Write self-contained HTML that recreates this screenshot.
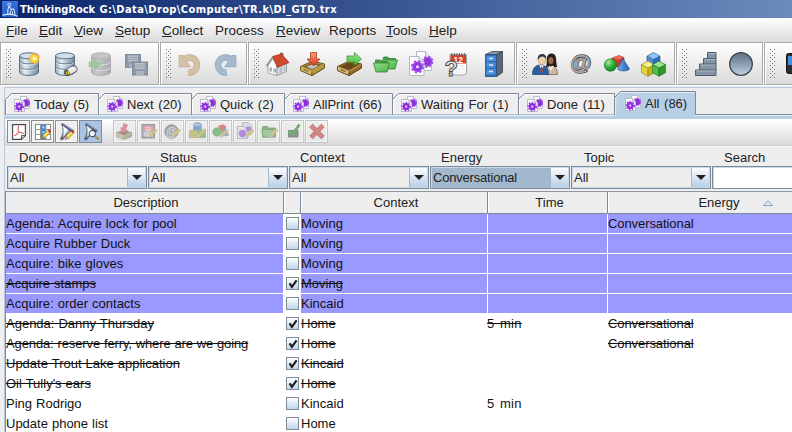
<!DOCTYPE html>
<html><head><meta charset="utf-8"><title>ThinkingRock</title>
<style>
*{box-sizing:border-box;margin:0;padding:0}
html,body{width:792px;height:432px;overflow:hidden;background:#eee}
body{font-family:"Liberation Sans",sans-serif;font-size:13px;color:#1a1a1a;position:relative;word-spacing:.4px}
.a{position:absolute}
svg{position:absolute;overflow:visible}
#title{position:absolute;left:0;top:0;width:792px;height:18px;background:linear-gradient(90deg,#0a246a 0,#a6caf0 1280px)}
#title span{position:absolute;left:20px;top:2px;font-family:"DejaVu Sans Condensed","DejaVu Sans",sans-serif;font-weight:bold;font-size:11px;color:#fff;line-height:16px;white-space:nowrap}
#menu{position:absolute;left:0;top:18px;width:792px;height:24px;background:linear-gradient(#fff,#dadada)}
#menu span{position:absolute;top:5px;line-height:16px;white-space:nowrap;font-size:13.5px;color:#222}
#menu u{text-decoration:underline;text-underline-offset:1px}
#tbar{position:absolute;left:0;top:42px;width:792px;height:44px;background:#fff}
.tg{position:absolute;top:0px;height:43px;border:1px solid #a9a9a9;background:linear-gradient(#fff,#dadada);box-shadow:inset 1px 1px 0 #fff}
#tabs{position:absolute;left:0;top:86px;width:792px;height:30px;background:#eee}
.tab{position:absolute;top:6px;height:23px}
.tab span{position:absolute;top:5px;line-height:16px;white-space:nowrap;color:#222}
#band{position:absolute;left:5px;top:115px;width:787px;height:4px;background:#b8cfe5;border-top:1px solid #e6eef7}
#stb{position:absolute;left:5px;top:119px;width:787px;height:27px;background:linear-gradient(#fff,#dadada);border-bottom:1px solid #cdcdcd}
.sb{position:absolute;top:1px;width:23px;height:23px;border:1px solid #8c8c8c;background:#eee;box-shadow:inset 0 0 0 1px rgba(255,255,255,.55)}
.sbd{position:absolute;top:1px;width:23px;height:23px;border:1px solid #c6c6c6;background:rgba(232,232,232,.75);box-shadow:inset 0 0 0 1px rgba(255,255,255,.5)}
#flt{position:absolute;left:5px;top:146px;width:787px;height:46px;background:#eee;border-top:1px solid #fafafa}
.lbl{position:absolute;top:150px;line-height:16px;white-space:nowrap;color:#222}
.cb{position:absolute;top:166px;height:23px;width:140px;border:1px solid #7a8a99;background:#eee;box-shadow:inset 1px 1px 0 #c9d9ea, inset -1px -1px 0 #c9d9ea}
.cb span{position:absolute;left:2px;top:3px;line-height:16px;white-space:nowrap;color:#222}
.cb i{position:absolute;right:1px;top:1px;width:18px;height:19px;background:linear-gradient(#fdfeff,#dde8f3 45%,#b8cfe5);border-left:1px solid #a3b8cc}
.cb i:after{content:"";position:absolute;left:4px;top:7px;border:5px solid transparent;border-top:5px solid #222;border-bottom:0}
#hdr{position:absolute;left:5px;top:191px;width:787px;height:23px;border-left:1px solid #7a8a99;background:#eee;border-top:1px solid #8c96a3;border-bottom:1px solid #7a8a99}
.h{position:absolute;top:0;height:21px;margin-left:-1px;padding-left:4px;border-right:1px solid #7a8a99;box-shadow:1px 0 0 #fff;text-align:center;line-height:21px;color:#222}
#rows{position:absolute;left:5px;top:214px;width:787px;height:218px;background:#fff}
.sel{position:absolute;left:1px;width:786px;height:19px;background:#9999ff}
.t{position:absolute;line-height:16px;white-space:nowrap;color:#111}
.s{text-decoration:line-through}
.ck{position:absolute;left:286px;width:13px;height:13px;border:1px solid #7a8a99;background:linear-gradient(#fff,#dde8f3 50%,#c4d6ea);}
#lf{position:absolute;left:5px;top:214px;width:1px;height:218px;background:#7a8a99}
</style></head><body>
<div id="title"><svg style="left:2px;top:1px" width="16" height="16" viewBox="0 0 16 16"><defs><linearGradient id="ti" x1="0" y1="0" x2="0.3" y2="1"><stop offset="0" stop-color="#3f7ae6"/><stop offset="1" stop-color="#2458c4"/></linearGradient></defs><rect width="16" height="16" fill="url(#ti)"/><circle cx="7.300" cy="3.600" r="1.500" fill="none" stroke="#cfe4ff" stroke-width="1"/><path d="M7 5.500C5.500 8 5.500 11 5.800 13.500M7.300 5.800L9.500 8.500L11.500 8C12.500 9.500 13 11.500 13 13.500M8 13.500C8 11.500 8.500 10 9.500 8.500M10 13.500L10.800 11" fill="none" stroke="#cfe4ff" stroke-width="1.100" stroke-linecap="round"/><path d="M0.500 14.200C4 12.800 11 13 15.500 15.300" stroke="#e2efff" stroke-width="1.200" fill="none"/></svg><span>ThinkingRock<b style="letter-spacing:0.4px;font-weight:bold"> G:\Data\Drop\Computer\TR.k\DI_GTD.trx</b></span></div>
<div id="menu"><span style="left:6px"><u>F</u>ile</span><span style="left:39px"><u>E</u>dit</span><span style="left:74px"><u>V</u>iew</span><span style="left:115px"><u>S</u>etup</span><span style="left:162px"><u>C</u>ollect</span><span style="left:215px">Process</span><span style="left:276px"><u>R</u>eview</span><span style="left:329px">Reports</span><span style="left:386px"><u>T</u>ools</span><span style="left:429px"><u>H</u>elp</span></div>
<div id="tbar"><div class="tg" style="left:0px;width:159px"></div><svg style="left:6px;top:7px" width="5" height="29" viewBox="0 0 5 29"><path d="M0.5 0V29M4.5 0V29" stroke="#6e6e6e" stroke-dasharray="1 3"/><path d="M2.5 2V29" stroke="#6e6e6e" stroke-dasharray="1 3"/><path d="M1.5 1V29M3.5 3V29" stroke="#fff" stroke-opacity=".9" stroke-dasharray="1 3"/></svg><div class="tg" style="left:160px;width:87px"></div><svg style="left:166px;top:7px" width="5" height="29" viewBox="0 0 5 29"><path d="M0.5 0V29M4.5 0V29" stroke="#6e6e6e" stroke-dasharray="1 3"/><path d="M2.5 2V29" stroke="#6e6e6e" stroke-dasharray="1 3"/><path d="M1.5 1V29M3.5 3V29" stroke="#fff" stroke-opacity=".9" stroke-dasharray="1 3"/></svg><div class="tg" style="left:248px;width:267px"></div><svg style="left:254px;top:7px" width="5" height="29" viewBox="0 0 5 29"><path d="M0.5 0V29M4.5 0V29" stroke="#6e6e6e" stroke-dasharray="1 3"/><path d="M2.5 2V29" stroke="#6e6e6e" stroke-dasharray="1 3"/><path d="M1.5 1V29M3.5 3V29" stroke="#fff" stroke-opacity=".9" stroke-dasharray="1 3"/></svg><div class="tg" style="left:516px;width:159px"></div><svg style="left:522px;top:7px" width="5" height="29" viewBox="0 0 5 29"><path d="M0.5 0V29M4.5 0V29" stroke="#6e6e6e" stroke-dasharray="1 3"/><path d="M2.5 2V29" stroke="#6e6e6e" stroke-dasharray="1 3"/><path d="M1.5 1V29M3.5 3V29" stroke="#fff" stroke-opacity=".9" stroke-dasharray="1 3"/></svg><div class="tg" style="left:676px;width:87px"></div><svg style="left:682px;top:7px" width="5" height="29" viewBox="0 0 5 29"><path d="M0.5 0V29M4.5 0V29" stroke="#6e6e6e" stroke-dasharray="1 3"/><path d="M2.5 2V29" stroke="#6e6e6e" stroke-dasharray="1 3"/><path d="M1.5 1V29M3.5 3V29" stroke="#fff" stroke-opacity=".9" stroke-dasharray="1 3"/></svg><div class="tg" style="left:764px;width:37px"></div><svg style="left:770px;top:7px" width="5" height="29" viewBox="0 0 5 29"><path d="M0.5 0V29M4.5 0V29" stroke="#6e6e6e" stroke-dasharray="1 3"/><path d="M2.5 2V29" stroke="#6e6e6e" stroke-dasharray="1 3"/><path d="M1.5 1V29M3.5 3V29" stroke="#fff" stroke-opacity=".9" stroke-dasharray="1 3"/></svg></div>
<svg style="left:19px;top:52px" width="22" height="25" viewBox="0 0 22 25"><defs><linearGradient id="g1" x1="0" x2="1" y1="0" y2="0"><stop offset="0" stop-color="#8fa7ba"/><stop offset=".3" stop-color="#e4ecf2"/><stop offset="1" stop-color="#6a8499"/></linearGradient></defs><path d="M0.5 3.8V20C0.5 24.5 19.5 24.5 19.5 20V3.800z" fill="url(#g1)" stroke="#566f82"/><path d="M0.5 9C0.5 12.800 19.5 12.800 19.5 9M0.5 14.500C0.5 18.300 19.5 18.300 19.5 14.500" fill="none" stroke="#566f82" stroke-opacity=".85"/><path d="M1 10.100C1 13.900 19 13.900 19 10.100M1 15.600C1 19.400 19 19.400 19 15.600" fill="none" stroke="#fff" stroke-opacity=".55"/><ellipse cx="10" cy="3.800" rx="9.5" ry="3" fill="#d3dfe8" stroke="#566f82"/><defs><radialGradient id="st"><stop offset="0" stop-color="#fffdf0"/><stop offset=".3" stop-color="#ffe36a"/><stop offset=".65" stop-color="#f9b92a" stop-opacity=".85"/><stop offset="1" stop-color="#f7b020" stop-opacity="0"/></radialGradient></defs><circle cx="15.5" cy="6.5" r="6.3" fill="url(#st)"/><path d="M15.5 1.500l1 3.200 3-1.700-1.700 3 3.200 1-3.200 1 1.700 3-3-1.700-1 3.200-1-3.200-3 1.700 1.700-3-3.200-1 3.200-1-1.700-3 3 1.700z" fill="#ffd84a" opacity=".9"/><circle cx="15.5" cy="6.5" r="1.600" fill="#fffce8"/></svg>
<svg style="left:55px;top:52px" width="24" height="25" viewBox="0 0 24 25"><defs><linearGradient id="g2" x1="0" x2="1" y1="0" y2="0"><stop offset="0" stop-color="#8fa7ba"/><stop offset=".3" stop-color="#e4ecf2"/><stop offset="1" stop-color="#6a8499"/></linearGradient></defs><path d="M0.5 3.8V20C0.5 24.5 19.5 24.5 19.5 20V3.800z" fill="url(#g2)" stroke="#566f82"/><path d="M0.5 9C0.5 12.800 19.5 12.800 19.5 9M0.5 14.500C0.5 18.300 19.5 18.300 19.5 14.500" fill="none" stroke="#566f82" stroke-opacity=".85"/><path d="M1 10.100C1 13.900 19 13.900 19 10.100M1 15.600C1 19.400 19 19.400 19 15.600" fill="none" stroke="#fff" stroke-opacity=".55"/><ellipse cx="10" cy="3.800" rx="9.5" ry="3" fill="#d3dfe8" stroke="#566f82"/><g transform="rotate(-28 15 19)"><rect x="9" y="16" width="13.500" height="6.400" rx="3.200" fill="#e4e7ea" stroke="#5f666c" stroke-width=".9"/><path d="M13 16.300h6v2h-6z" fill="#fff" opacity=".8"/><rect x="9" y="16" width="5" height="6.400" rx="2.500" fill="#4f5a62"/><path d="M10.300 20.800l1.600-3M12.200 21.200l1.600-3" stroke="#f2d43a" stroke-width="1.100"/></g></svg>
<svg style="left:89px;top:52px" width="23" height="25" viewBox="0 0 23 25"><g transform="translate(2 0)" opacity=".85"><defs><linearGradient id="g3" x1="0" x2="1" y1="0" y2="0"><stop offset="0" stop-color="#aeb2b4"/><stop offset=".3" stop-color="#c2c5c6"/><stop offset="1" stop-color="#9da1a3"/></linearGradient></defs><path d="M0.5 3.8V20C0.5 24.5 19.5 24.5 19.5 20V3.800z" fill="url(#g3)" stroke="#a4a8aa"/><path d="M0.5 9C0.5 12.800 19.5 12.800 19.5 9M0.5 14.500C0.5 18.300 19.5 18.300 19.5 14.500" fill="none" stroke="#a4a8aa" stroke-opacity=".85"/><path d="M1 10.100C1 13.900 19 13.900 19 10.100M1 15.600C1 19.400 19 19.400 19 15.600" fill="none" stroke="#fff" stroke-opacity=".55"/><ellipse cx="10" cy="3.800" rx="9.5" ry="3" fill="#bcbfc0" stroke="#a4a8aa"/></g><path d="M0 10h5.500V6.500l6 6-6 6V15H0z" fill="#9ec79c" stroke="#93bb92" stroke-width=".6" opacity=".9"/></svg>
<svg style="left:125px;top:54px" width="23" height="22" viewBox="0 0 23 22"><g><rect x="0.5" y="0.5" width="15" height="13" fill="#8c9aaa" stroke="#7d8c9c"/><rect x="3" y="1.5" width="10" height="6" fill="#b9c0c8"/><path d="M3 3.5h10M3 5.5h10" stroke="#98a3af"/><rect x="4" y="9.5" width="8" height="4" fill="#a9b2bc"/></g><g transform="translate(7 7.5)"><rect x="0.5" y="0.5" width="15" height="13" fill="#8c9aaa" stroke="#7d8c9c"/><rect x="3" y="1.5" width="10" height="6" fill="#b9c0c8"/><path d="M3 3.5h10M3 5.5h10" stroke="#98a3af"/><rect x="4" y="9.5" width="8" height="4" fill="#a9b2bc"/></g></svg>
<svg style="left:178px;top:54px" width="23" height="22" viewBox="0 0 23 22"><path d="M10.200 18.400A7.500 7.500 0 1 0 5 7.250" fill="none" stroke="#bfad92" stroke-width="6.600"/><path d="M0.700 1.100h4.500l7.600 12.100H0.700z" fill="#bfad92"/><path d="M10.200 18.400A7.500 7.500 0 1 0 5 7.250" fill="none" stroke="#d3c1a5" stroke-width="5.200"/><path d="M1.400 1.800h3.400l6.700 10.700H1.400z" fill="#d3c1a5"/></svg>
<svg style="left:214px;top:54px" width="23" height="22" viewBox="0 0 23 22"><g transform="translate(23 0) scale(-1 1)"><path d="M10.200 18.400A7.500 7.500 0 1 0 5 7.250" fill="none" stroke="#90a6bb" stroke-width="6.600"/><path d="M0.700 1.100h4.500l7.600 12.100H0.700z" fill="#90a6bb"/><path d="M10.200 18.400A7.500 7.500 0 1 0 5 7.250" fill="none" stroke="#a5bacd" stroke-width="5.200"/><path d="M1.400 1.800h3.400l6.700 10.700H1.400z" fill="#a5bacd"/></g></svg>
<svg style="left:265px;top:52px" width="25" height="24" viewBox="0 0 25 24"><path d="M15.500 1h2.500v5h-2.500z" fill="#c8694a" stroke="#8a4a36" stroke-width=".6"/><path d="M3 12.500V21l9 2.500V13L7.500 6z" fill="#fbfbfc" stroke="#8e969e" stroke-width=".8"/><path d="M12 13v10.500l9.500-4V10.500z" fill="#d9dde2" stroke="#8e969e" stroke-width=".8"/><path d="M7.500 4.500L16.500 2 24 10.500 12.500 15.500z" fill="#cc4a2e" stroke="#9a2f1c" stroke-width=".7"/><path d="M7.500 4.500L1 13.500l1.600.8L7.800 6.500z" fill="#b9a595" stroke="#8b7a6c" stroke-width=".6"/><path d="M4.500 15.500h2.500v4h-2.500zM8.500 16.500h2.500v4h-2.500z" fill="#9fb0c2"/><path d="M14.500 16l2.500-1v6l-2.500 1zM18.500 14.500l1.800-.7v5l-1.800.7z" fill="#b4c0cc"/></svg>
<svg style="left:300px;top:52px" width="26" height="24" viewBox="0 0 26 24"><g transform="translate(0 8.500)"><path d="M0.500 6L12.500 0.500L24.500 3.500V7.500L12 15L0.500 10z" fill="#b8953f" stroke="#5f4b18" stroke-width=".9" stroke-linejoin="round"/><path d="M3 6.200L12.500 2L21.500 4.200L12 9.200z" fill="#7b6224"/><path d="M0.500 6L12 10.500V15L0.500 10z" fill="#d9bc6a" stroke="#5f4b18" stroke-width=".7"/><path d="M12 10.500L24.500 3.500V7.500L12 15z" fill="#b8953f" stroke="#5f4b18" stroke-width=".7"/><path d="M3.500 8.200L8.500 10.200V11.800L3.500 9.800z" fill="#7b6224" opacity=".8"/><path d="M0.800 6.200L12 10.700L24.200 3.800" fill="none" stroke="#f0dc9a" stroke-width=".7" opacity=".8"/><path d="M6.500 6.300l6-2.600 6 1.500-6.500 3.200z" fill="#c4c8cc"/></g><defs><linearGradient id="ra" x1="0" x2="0" y1="0" y2="1"><stop offset="0" stop-color="#f7a070"/><stop offset="1" stop-color="#d8341c"/></linearGradient></defs><path d="M10.500 0.500h6v6.500h3.500l-6.500 7-6.500-7h3.500z" fill="url(#ra)" stroke="#b23a22" stroke-width=".8"/></svg>
<svg style="left:337px;top:52px" width="26" height="24" viewBox="0 0 26 24"><g transform="translate(0 8.500)"><path d="M0.500 6L12.500 0.500L24.500 3.500V7.500L12 15L0.500 10z" fill="#9a6c2c" stroke="#5a3c12" stroke-width=".9" stroke-linejoin="round"/><path d="M3 6.200L12.500 2L21.500 4.200L12 9.200z" fill="#6b4516"/><path d="M0.500 6L12 10.500V15L0.500 10z" fill="#dcc07a" stroke="#5a3c12" stroke-width=".7"/><path d="M12 10.500L24.500 3.500V7.500L12 15z" fill="#9a6c2c" stroke="#5a3c12" stroke-width=".7"/><path d="M3.500 8.200L8.500 10.200V11.800L3.500 9.800z" fill="#6b4516" opacity=".8"/><path d="M0.800 6.200L12 10.700L24.200 3.800" fill="none" stroke="#f0dc9a" stroke-width=".7" opacity=".8"/></g><defs><linearGradient id="ga" x1="0" x2="0" y1="0" y2="1"><stop offset="0" stop-color="#9be88a"/><stop offset="1" stop-color="#3fb53a"/></linearGradient></defs><path d="M10 4h7.500V0.500l7 6.500-7 6.500V10H10z" fill="url(#ga)" stroke="#3e9a38" stroke-width=".8" stroke-linejoin="round"/></svg>
<svg style="left:373px;top:55px" width="25" height="18" viewBox="0 0 25 18"><defs><linearGradient id="fog" x1="0" y1="0" x2="1" y2="1"><stop offset="0" stop-color="#98e090"/><stop offset="1" stop-color="#48b046"/></linearGradient></defs><g transform="translate(8 0.500)"><path d="M2.500 1.500h4.500l1 1.500h6.500v4h-12z" fill="#4aa248" stroke="#2f8430" stroke-width=".8" stroke-linejoin="round"/><path d="M0.500 4.500h16l-2.500 9h-11z" fill="url(#fog)" stroke="#2f8430" stroke-width=".8" stroke-linejoin="round"/></g><g transform="translate(0 3.500)"><path d="M2.500 1.500h4.500l1 1.500h6.500v4h-12z" fill="#4aa248" stroke="#2f8430" stroke-width=".8" stroke-linejoin="round"/><path d="M0.500 4.500h16l-2.500 9h-11z" fill="url(#fog)" stroke="#2f8430" stroke-width=".8" stroke-linejoin="round"/></g></svg>
<svg style="left:409px;top:51px" width="24" height="25" viewBox="0 0 24 25"><path d="M7.500 0.500h9l6 6v13h-15z" fill="#fbfbfd" stroke="#b4b8c2"/><path d="M16.500 0.500v6h6" fill="#e6e8ef" stroke="#b4b8c2"/><circle cx="18.500" cy="10.800" r="4.600" fill="#8f36dc"/><circle cx="18.500" cy="10.800" r="5" fill="none" stroke="#a656ee" stroke-width="2" stroke-dasharray="2.200 1.700"/><path d="M0.500 5.500h9.500l5 5v14h-14.500z" fill="#fdfdff" stroke="#b4b8c2"/><path d="M10 5.500v5h5" fill="#e6e8ef" stroke="#b4b8c2"/><circle cx="8.500" cy="15.800" r="5.200" fill="#9238e2"/><circle cx="8.500" cy="15.800" r="5.600" fill="none" stroke="#a656ee" stroke-width="2.200" stroke-dasharray="2.400 2"/><circle cx="8.500" cy="15.800" r="1.500" fill="#f1e2ff"/></svg>
<svg style="left:445px;top:52px" width="23" height="24" viewBox="0 0 23 24"><path d="M5 2.500h16.500v19l-3 1.500H5z" fill="#fbfbfb" stroke="#8a8f96" stroke-width=".8"/><rect x="5.500" y="3" width="15.500" height="8.500" fill="#d2402a"/><path d="M7 1v3M9.500 1v3M12 1v3M14.500 1v3M17 1v3M19.500 1v3" stroke="#666" stroke-width="1"/><text x="13.300" y="10.700" font-family="Liberation Sans,sans-serif" font-weight="bold" font-size="8.500" fill="#fff" text-anchor="middle">12</text><path d="M8 14h12M8 17h12M8 20h10" stroke="#c9d4e2" stroke-width="1.200" stroke-dasharray="1.500 1.500"/><text x="6.300" y="23.600" font-family="Liberation Sans,sans-serif" font-weight="bold" font-size="22" fill="#e4e4e4" stroke="#505050" stroke-width="1" text-anchor="middle">?</text></svg>
<svg style="left:485px;top:51px" width="19" height="26" viewBox="0 0 19 26"><path d="M0.500 3.500L7 0.500h10.500L11.500 3.500z" fill="#8a96a2" stroke="#3f4a55" stroke-width=".8"/><path d="M11.500 3.500L17.500 0.500V21.500L11.500 25.500z" fill="#5b6670" stroke="#3a444e" stroke-width=".8"/><rect x="0.500" y="3.500" width="11" height="22" fill="#2f6fb5" stroke="#2a4f80" stroke-width=".8"/><path d="M1.500 5h9v5h-9zM1.500 11.500h9v5h-9zM1.500 18h9v5.500h-9z" fill="#4a90dc"/><path d="M4 7.500h4M4 14h4M4 20.500h4" stroke="#d8e8fa" stroke-width="1.300"/></svg>
<svg style="left:532px;top:52px" width="26" height="23" viewBox="0 0 26 23"><path d="M14 22.500c0-5 1.500-8.500 5.500-8.500s6 3.500 6 8.500z" fill="#cdb99e" stroke="#6a5a48" stroke-width=".7"/><path d="M14.800 8c0-4.500 2-6.500 4.700-6.500s4.700 2 4.700 6.500c0 3 .8 5.500 .8 7h-4l-1.500-1.500-1.500 1.500h-4c.5-2 .8-4 .8-7z" fill="#2c1e16"/><ellipse cx="18.800" cy="8.500" rx="2.600" ry="3.500" fill="#9a6a46"/><path d="M17.500 13.500l1.500 2 1.800-2 1.200 1-3 4.500-2.500-4.500z" fill="#f2ece2"/><path d="M0.500 22.500c0-6 2.500-9.500 8-9.500s8 3.500 8 9.500z" fill="#2a5fa6" stroke="#1a3a6a" stroke-width=".7"/><path d="M7.200 13.200l2.300 4.500 2.300-4.500z" fill="#fff"/><path d="M9 14.500h1l.7 5-1.200 1.500-1.200-1.500z" fill="#c23a2a"/><ellipse cx="10" cy="8" rx="3.700" ry="4.600" fill="#f2cfa4" stroke="#a87c58" stroke-width=".5"/><path d="M5.800 8c-.6-4 1.600-6 4.200-6s4.800 1.600 4.200 5.200c-.8-1.800-2.400-2.800-4-2.800s-3.400 1.200-4.400 3.600z" fill="#2c3550"/></svg>
<svg style="left:570px;top:52px" width="22" height="22" viewBox="0 0 22 22"><text x="11" y="18" font-family="Liberation Sans,sans-serif" font-weight="bold" font-size="21.500" fill="#8e8e8e" stroke="#505050" stroke-width="1.500" paint-order="stroke" text-anchor="middle">@</text><text x="10.600" y="17.600" font-family="Liberation Sans,sans-serif" font-weight="bold" font-size="21.500" fill="#ffffff" fill-opacity=".28" text-anchor="middle">@</text></svg>
<svg style="left:604px;top:55px" width="26" height="17" viewBox="0 0 26 17"><defs><radialGradient id="sg" cx=".35" cy=".3" r=".8"><stop offset="0" stop-color="#a8f09a"/><stop offset=".5" stop-color="#2fae34"/><stop offset="1" stop-color="#157a1e"/></radialGradient><linearGradient id="cg" x1="0" x2="1"><stop offset="0" stop-color="#6fb0ee"/><stop offset="1" stop-color="#1f5fae"/></linearGradient></defs><path d="M8 3l7-2.500 5 2V10l-6 2-6-2z" fill="#d23a2e" stroke="#8e1f18" stroke-width=".6"/><path d="M8 3l6 1.800 6-2.300-5-2z" fill="#ee6a5c"/><path d="M19 3.500L25.500 14c-1 2.500-11 2.500-12 0z" fill="url(#cg)" stroke="#1b4f8e" stroke-width=".6"/><circle cx="6.500" cy="10" r="6.300" fill="url(#sg)" stroke="#1a6e22" stroke-width=".5"/></svg>
<svg style="left:641px;top:52px" width="25" height="24" viewBox="0 0 25 24"><g transform="translate(6 0.5)"><path d="M0 3.6400000000000006L6.5 0L13 3.6400000000000006L6.5 7.280000000000001z" fill="#8ec4f4" stroke="#1f4f90" stroke-width=".6"/><path d="M0 3.6400000000000006V11.700000000000001L6.5 15.340000000000002V7.280000000000001z" fill="#4a90dc" stroke="#1f4f90" stroke-width=".6"/><path d="M13 3.6400000000000006V11.700000000000001L6.5 15.340000000000002V7.280000000000001z" fill="#2b6cc0" stroke="#1f4f90" stroke-width=".6"/></g><g transform="translate(0.5 9)"><path d="M0 3.6400000000000006L6.5 0L13 3.6400000000000006L6.5 7.280000000000001z" fill="#f6ee8a" stroke="#8a7a14" stroke-width=".6"/><path d="M0 3.6400000000000006V11.700000000000001L6.5 15.340000000000002V7.280000000000001z" fill="#e8d43c" stroke="#8a7a14" stroke-width=".6"/><path d="M13 3.6400000000000006V11.700000000000001L6.5 15.340000000000002V7.280000000000001z" fill="#c9b21f" stroke="#8a7a14" stroke-width=".6"/></g><g transform="translate(11.5 9)"><path d="M0 3.6400000000000006L6.5 0L13 3.6400000000000006L6.5 7.280000000000001z" fill="#9be08a" stroke="#1f6e20" stroke-width=".6"/><path d="M0 3.6400000000000006V11.700000000000001L6.5 15.340000000000002V7.280000000000001z" fill="#4cbf44" stroke="#1f6e20" stroke-width=".6"/><path d="M13 3.6400000000000006V11.700000000000001L6.5 15.340000000000002V7.280000000000001z" fill="#2e9a2c" stroke="#1f6e20" stroke-width=".6"/></g></svg>
<svg style="left:695px;top:52px" width="22" height="24" viewBox="0 0 22 24"><path d="M12.500 0.500h8.500v23H0.500v-5.500h4v-6h4v-5.500h4z" fill="#8696a6" stroke="#4f5c6a" stroke-width="1"/><path d="M12.500 6.500H21M8.500 12H21M4.500 18H21" stroke="#4f5c6a" stroke-width="1"/><path d="M13.500 1.500h7M9.500 7.500h11M5.500 13h15M1.500 19h19" stroke="#a9b6c3" stroke-width="1"/></svg>
<svg style="left:729px;top:52px" width="24" height="24" viewBox="0 0 24 24"><defs><linearGradient id="cr" x1="0" x2="0" y1="0" y2="1"><stop offset="0" stop-color="#5f7182"/><stop offset=".55" stop-color="#8fa3b5"/><stop offset="1" stop-color="#c2d3e2"/></linearGradient></defs><circle cx="12" cy="12" r="11.300" fill="url(#cr)" stroke="#36424d" stroke-width="1.300"/></svg>
<svg style="left:786px;top:53px" width="8" height="21" viewBox="0 0 8 21"><rect x="0.500" y="0.500" width="12" height="20" rx="2" fill="#2a2d31" stroke="#111"/><rect x="2" y="3" width="9" height="9" fill="#3f8fe0"/></svg>

<div id="tabs"></div><div id="band"></div><svg style="left:0;top:86px" width="792" height="346" viewBox="0 86 792 346"><path d="M4.5 432V87.5H792" fill="none" stroke="#b9cade"/><path d="M5 114.5H792" stroke="#7a8a99"/><path d="M5.5 114.5V99.5L11.5 93.5H98.5V114.5" fill="#eeeeee" stroke="#7a8a99"/><path d="M6.5 114V100L12.0 94.5H97.5" fill="none" stroke="#fff"/><path d="M98.5 114.5V99.5L104.5 93.5H191.5V114.5" fill="#eeeeee" stroke="#7a8a99"/><path d="M99.5 114V100L105.0 94.5H190.5" fill="none" stroke="#fff"/><path d="M191.5 114.5V99.5L197.5 93.5H284.5V114.5" fill="#eeeeee" stroke="#7a8a99"/><path d="M192.5 114V100L198.0 94.5H283.5" fill="none" stroke="#fff"/><path d="M284.5 114.5V99.5L290.5 93.5H392.5V114.5" fill="#eeeeee" stroke="#7a8a99"/><path d="M285.5 114V100L291.0 94.5H391.5" fill="none" stroke="#fff"/><path d="M392.5 114.5V99.5L398.5 93.5H518.5V114.5" fill="#eeeeee" stroke="#7a8a99"/><path d="M393.5 114V100L399.0 94.5H517.5" fill="none" stroke="#fff"/><path d="M518.5 114.5V99.5L524.5 93.5H614.5V114.5" fill="#eeeeee" stroke="#7a8a99"/><path d="M519.5 114V100L525.0 94.5H613.5" fill="none" stroke="#fff"/><path d="M614.5 115V97.5L620.5 91.5H695.5V115" fill="#b8cfe5" stroke="#7a8a99"/><rect x="615" y="114" width="80" height="3" fill="#b8cfe5"/><path d="M615.5 115V98L621.0 92.5H694.5" fill="none" stroke="#e3ecf6"/><path d="M617 99.5v12M619 98.5v12" stroke="#dce8f4" stroke-dasharray="1 2"/></svg><svg style="left:14px;top:96px" width="17" height="16" viewBox="0 0 17 16"><path d="M6.5 0.5h6l3 3v9h-9z" fill="#fbfbfd" stroke="#b9bcc6"/><path d="M12.5 0.5v3h3" fill="#e4e6ee" stroke="#b9bcc6"/><circle cx="12" cy="7" r="3.4" fill="#8a2fd8"/><circle cx="12" cy="7" r="3.4" fill="none" stroke="#a24cec" stroke-width="1.6" stroke-dasharray="1.4 1.3"/><path d="M0.5 3.5h7l3 3v9h-10z" fill="#fdfdff" stroke="#b9bcc6"/><path d="M7.5 3.5v3h3" fill="#e4e6ee" stroke="#b9bcc6"/><circle cx="5.2" cy="10.6" r="3.6" fill="#8e2fe0"/><circle cx="5.2" cy="10.6" r="3.9" fill="none" stroke="#9c3cf0" stroke-width="1.8" stroke-dasharray="1.5 1.4"/><circle cx="5.2" cy="10.6" r="1.1" fill="#f3e6ff"/></svg><div class="t" style="left:34px;top:97px;color:#222;word-spacing:1px">Today (5)</div><svg style="left:107px;top:96px" width="17" height="16" viewBox="0 0 17 16"><path d="M6.5 0.5h6l3 3v9h-9z" fill="#fbfbfd" stroke="#b9bcc6"/><path d="M12.5 0.5v3h3" fill="#e4e6ee" stroke="#b9bcc6"/><circle cx="12" cy="7" r="3.4" fill="#8a2fd8"/><circle cx="12" cy="7" r="3.4" fill="none" stroke="#a24cec" stroke-width="1.6" stroke-dasharray="1.4 1.3"/><path d="M0.5 3.5h7l3 3v9h-10z" fill="#fdfdff" stroke="#b9bcc6"/><path d="M7.5 3.5v3h3" fill="#e4e6ee" stroke="#b9bcc6"/><circle cx="5.2" cy="10.6" r="3.6" fill="#8e2fe0"/><circle cx="5.2" cy="10.6" r="3.9" fill="none" stroke="#9c3cf0" stroke-width="1.8" stroke-dasharray="1.5 1.4"/><circle cx="5.2" cy="10.6" r="1.1" fill="#f3e6ff"/></svg><div class="t" style="left:127px;top:97px;color:#222;word-spacing:1px">Next (20)</div><svg style="left:200px;top:96px" width="17" height="16" viewBox="0 0 17 16"><path d="M6.5 0.5h6l3 3v9h-9z" fill="#fbfbfd" stroke="#b9bcc6"/><path d="M12.5 0.5v3h3" fill="#e4e6ee" stroke="#b9bcc6"/><circle cx="12" cy="7" r="3.4" fill="#8a2fd8"/><circle cx="12" cy="7" r="3.4" fill="none" stroke="#a24cec" stroke-width="1.6" stroke-dasharray="1.4 1.3"/><path d="M0.5 3.5h7l3 3v9h-10z" fill="#fdfdff" stroke="#b9bcc6"/><path d="M7.5 3.5v3h3" fill="#e4e6ee" stroke="#b9bcc6"/><circle cx="5.2" cy="10.6" r="3.6" fill="#8e2fe0"/><circle cx="5.2" cy="10.6" r="3.9" fill="none" stroke="#9c3cf0" stroke-width="1.8" stroke-dasharray="1.5 1.4"/><circle cx="5.2" cy="10.6" r="1.1" fill="#f3e6ff"/></svg><div class="t" style="left:220px;top:97px;color:#222;word-spacing:1px">Quick (2)</div><svg style="left:293px;top:96px" width="17" height="16" viewBox="0 0 17 16"><path d="M6.5 0.5h6l3 3v9h-9z" fill="#fbfbfd" stroke="#b9bcc6"/><path d="M12.5 0.5v3h3" fill="#e4e6ee" stroke="#b9bcc6"/><circle cx="12" cy="7" r="3.4" fill="#8a2fd8"/><circle cx="12" cy="7" r="3.4" fill="none" stroke="#a24cec" stroke-width="1.6" stroke-dasharray="1.4 1.3"/><path d="M0.5 3.5h7l3 3v9h-10z" fill="#fdfdff" stroke="#b9bcc6"/><path d="M7.5 3.5v3h3" fill="#e4e6ee" stroke="#b9bcc6"/><circle cx="5.2" cy="10.6" r="3.6" fill="#8e2fe0"/><circle cx="5.2" cy="10.6" r="3.9" fill="none" stroke="#9c3cf0" stroke-width="1.8" stroke-dasharray="1.5 1.4"/><circle cx="5.2" cy="10.6" r="1.1" fill="#f3e6ff"/></svg><div class="t" style="left:313px;top:97px;color:#222;word-spacing:1px">AllPrint (66)</div><svg style="left:401px;top:96px" width="17" height="16" viewBox="0 0 17 16"><path d="M6.5 0.5h6l3 3v9h-9z" fill="#fbfbfd" stroke="#b9bcc6"/><path d="M12.5 0.5v3h3" fill="#e4e6ee" stroke="#b9bcc6"/><circle cx="12" cy="7" r="3.4" fill="#8a2fd8"/><circle cx="12" cy="7" r="3.4" fill="none" stroke="#a24cec" stroke-width="1.6" stroke-dasharray="1.4 1.3"/><path d="M0.5 3.5h7l3 3v9h-10z" fill="#fdfdff" stroke="#b9bcc6"/><path d="M7.5 3.5v3h3" fill="#e4e6ee" stroke="#b9bcc6"/><circle cx="5.2" cy="10.6" r="3.6" fill="#8e2fe0"/><circle cx="5.2" cy="10.6" r="3.9" fill="none" stroke="#9c3cf0" stroke-width="1.8" stroke-dasharray="1.5 1.4"/><circle cx="5.2" cy="10.6" r="1.1" fill="#f3e6ff"/></svg><div class="t" style="left:421px;top:97px;color:#222;word-spacing:1px">Waiting For (1)</div><svg style="left:527px;top:96px" width="17" height="16" viewBox="0 0 17 16"><path d="M6.5 0.5h6l3 3v9h-9z" fill="#fbfbfd" stroke="#b9bcc6"/><path d="M12.5 0.5v3h3" fill="#e4e6ee" stroke="#b9bcc6"/><circle cx="12" cy="7" r="3.4" fill="#8a2fd8"/><circle cx="12" cy="7" r="3.4" fill="none" stroke="#a24cec" stroke-width="1.6" stroke-dasharray="1.4 1.3"/><path d="M0.5 3.5h7l3 3v9h-10z" fill="#fdfdff" stroke="#b9bcc6"/><path d="M7.5 3.5v3h3" fill="#e4e6ee" stroke="#b9bcc6"/><circle cx="5.2" cy="10.6" r="3.6" fill="#8e2fe0"/><circle cx="5.2" cy="10.6" r="3.9" fill="none" stroke="#9c3cf0" stroke-width="1.8" stroke-dasharray="1.5 1.4"/><circle cx="5.2" cy="10.6" r="1.1" fill="#f3e6ff"/></svg><div class="t" style="left:547px;top:97px;color:#222;word-spacing:1px">Done (11)</div><svg style="left:625px;top:95px" width="17" height="16" viewBox="0 0 17 16"><path d="M6.5 0.5h6l3 3v9h-9z" fill="#fbfbfd" stroke="#b9bcc6"/><path d="M12.5 0.5v3h3" fill="#e4e6ee" stroke="#b9bcc6"/><circle cx="12" cy="7" r="3.4" fill="#8a2fd8"/><circle cx="12" cy="7" r="3.4" fill="none" stroke="#a24cec" stroke-width="1.6" stroke-dasharray="1.4 1.3"/><path d="M0.5 3.5h7l3 3v9h-10z" fill="#fdfdff" stroke="#b9bcc6"/><path d="M7.5 3.5v3h3" fill="#e4e6ee" stroke="#b9bcc6"/><circle cx="5.2" cy="10.6" r="3.6" fill="#8e2fe0"/><circle cx="5.2" cy="10.6" r="3.9" fill="none" stroke="#9c3cf0" stroke-width="1.8" stroke-dasharray="1.5 1.4"/><circle cx="5.2" cy="10.6" r="1.1" fill="#f3e6ff"/></svg><div class="t" style="left:645px;top:96px;color:#222;word-spacing:1px">All (86)</div>

<div id="stb"><div class="sb" style="left:2px;top:1px;background:#eeeeee"></div><div class="sb" style="left:26px;top:1px;background:#eeeeee"></div><div class="sb" style="left:50px;top:1px;background:#eeeeee"></div><div class="sb" style="left:74px;top:1px;background:#a9c3e3;box-shadow:none;border-color:#7f8b99"></div><svg style="left:7px;top:5px" width="14" height="16" viewBox="0 0 14 16" ><path d="M0.600 0.600h12.800v11.200l-4 3.600h-8.800z" fill="#fff" stroke="#444" stroke-width="1.100"/><path d="M13.200 11.600h-3.800v3.600" fill="#dcdcdc" stroke="#3a3a3a" stroke-width=".9"/><path d="M6.500 2.200c-.8 2.200-.2 4.800 0 6c-1 1.800-2.400 2.800-4 3.300M6.500 8c1.500.2 3.500.6 5 1.400" fill="none" stroke="#e25555" stroke-width="1.100" stroke-linecap="round"/></svg><svg style="left:30px;top:5px" width="16" height="16" viewBox="0 0 16 16" ><rect x="0.500" y="0.500" width="15" height="15" fill="#fff" stroke="#8c8c8c"/><rect x="5.800" y="1" width="5" height="14" fill="#2f80d4"/><path d="M0.500 5.500h15M0.500 10.500h15M5.500 0.500v15M10.800 0.500v15" stroke="#8c8c8c" stroke-width=".9"/><rect x="7" y="2" width="2.600" height="2.400" fill="#8cc6ff"/><rect x="7" y="7" width="2.600" height="2.400" fill="#8cc6ff"/><g transform="translate(14.8 6.7) rotate(45)"><rect x="-1.700" y="-0.500" width="3.400" height="2.400" rx="1" fill="#d8362a"/><rect x="-1.700" y="1.900" width="3.400" height="6.800" fill="#f0d040" stroke="#8a7420" stroke-width=".5"/><path d="M-0.600 2v6.500" stroke="#fff6a8" stroke-width=".9"/><path d="M-1.700 8.700L0 11.500L1.700 8.700z" fill="#e8cfa0" stroke="#5a4a28" stroke-width=".4"/><path d="M-.6 10.500L0 11.500L.6 10.500z" fill="#333"/></g></svg><svg style="left:54px;top:4px" width="18" height="18" viewBox="0 0 18 18" ><defs><linearGradient id="fu1" x1="0" x2="1" y1="0.2" y2="0"><stop offset="0" stop-color="#5d6a78"/><stop offset=".22" stop-color="#f8fafc"/><stop offset=".5" stop-color="#b4bccb"/><stop offset=".8" stop-color="#4a5a80"/><stop offset="1" stop-color="#3a4668"/></linearGradient></defs><path d="M2.600 1.200C3.500 0.600 5 1 6 1.800L14 7.300C13.500 8.600 12 9 10.500 9.300L8 10.200L3.400 16.600C2.600 17.200 1.300 16.600 1.600 15.600C4.500 11 4.800 6 2.600 1.200z" fill="url(#fu1)" stroke="#46525f" stroke-width=".7"/><path d="M4.300 3.800L9 7.200L6.800 8.800L4.800 12.500C5.600 9.500 5.400 6 4.300 3.800z" fill="#fdfeff" opacity=".95"/><path d="M3.600 1.400L13.300 7.600" stroke="#44527a" stroke-width="2.300" stroke-linecap="round"/><path d="M4 0.900L13.600 6.900" stroke="#c9d0dc" stroke-width=".8" stroke-linecap="round"/><path d="M8.200 10L3.600 16.300" stroke="#55627a" stroke-width="1.200"/><g transform="translate(14.3 8.2) rotate(45)"><rect x="-1.700" y="-0.500" width="3.400" height="2.400" rx="1" fill="#d8362a"/><rect x="-1.700" y="1.900" width="3.400" height="6.800" fill="#f0d040" stroke="#8a7420" stroke-width=".5"/><path d="M-0.600 2v6.500" stroke="#fff6a8" stroke-width=".9"/><path d="M-1.700 8.700L0 11.500L1.700 8.700z" fill="#e8cfa0" stroke="#5a4a28" stroke-width=".4"/><path d="M-.6 10.500L0 11.500L.6 10.500z" fill="#333"/></g></svg><svg style="left:78px;top:4px" width="18" height="18" viewBox="0 0 18 18" ><defs><linearGradient id="fu2" x1="0" x2="1" y1="0.2" y2="0"><stop offset="0" stop-color="#5d6a78"/><stop offset=".22" stop-color="#f8fafc"/><stop offset=".5" stop-color="#b4bccb"/><stop offset=".8" stop-color="#4a5a80"/><stop offset="1" stop-color="#3a4668"/></linearGradient></defs><path d="M2.600 1.200C3.500 0.600 5 1 6 1.800L14 7.300C13.500 8.600 12 9 10.500 9.300L8 10.200L3.400 16.600C2.600 17.200 1.300 16.600 1.600 15.600C4.500 11 4.800 6 2.600 1.200z" fill="url(#fu2)" stroke="#46525f" stroke-width=".7"/><path d="M4.300 3.800L9 7.200L6.800 8.800L4.800 12.500C5.600 9.500 5.400 6 4.300 3.800z" fill="#fdfeff" opacity=".95"/><path d="M3.600 1.400L13.300 7.600" stroke="#44527a" stroke-width="2.300" stroke-linecap="round"/><path d="M4 0.900L13.600 6.900" stroke="#c9d0dc" stroke-width=".8" stroke-linecap="round"/><path d="M8.200 10L3.600 16.300" stroke="#55627a" stroke-width="1.200"/><path d="M11.500 12.700L15.200 16" stroke="#b08a48" stroke-width="2.200" stroke-linecap="round"/><circle cx="9.300" cy="10.500" r="3.100" fill="#f4f9ff" stroke="#4a5460" stroke-width="1.100"/></svg><div class="sbd" style="left:108px;top:1px"></div><div class="sbd" style="left:132px;top:1px"></div><div class="sbd" style="left:156px;top:1px"></div><div class="sbd" style="left:180px;top:1px"></div><div class="sbd" style="left:204px;top:1px"></div><div class="sbd" style="left:228px;top:1px"></div><div class="sbd" style="left:252px;top:1px"></div><div class="sbd" style="left:276px;top:1px"></div><div class="sbd" style="left:300px;top:1px"></div><svg style="left:111px;top:4px" width="18" height="17" viewBox="0 0 18 17" ><path d="M0.500 9.500L7 7.500 15.500 9.500V13.500L7.500 16.500 0.500 13.500z" fill="#b9b29e" stroke="#9d9788" stroke-width=".7"/><path d="M2.500 9.800L7 8.500l6 1.300-5.500 2z" fill="#8f8a7c"/><path d="M0.500 9.500v4l7 3v-4z" fill="#c9c3b0"/><path d="M7.500 0.500l4 1.500-2 4.500 2.300 1-5.800 3-1.200-6 2.200 1z" fill="#e0919a" stroke="#c97f88" stroke-width=".6"/></svg><svg style="left:136px;top:4px" width="18" height="17" viewBox="0 0 18 17" ><rect x="1" y="1.500" width="12.500" height="13.500" fill="#a9aaae" stroke="#8e9094" stroke-width=".8"/><rect x="2.500" y="3" width="9.500" height="5" fill="#e2a3a6"/><text x="7.200" y="7.500" font-family="Liberation Sans,sans-serif" font-weight="bold" font-size="5" fill="#f4e4e4" text-anchor="middle">12</text><rect x="2.500" y="8.500" width="9.500" height="5" fill="#cfd0d4"/><g transform="translate(15 6.5) rotate(45)"><rect x="-1.400" y="0" width="2.800" height="9" fill="#cfc488" stroke="#b5b09a" stroke-width=".4"/><path d="M-1.400 9L0 11.500L1.400 9z" fill="#cfc8b4"/></g></svg><svg style="left:159px;top:4px" width="18" height="17" viewBox="0 0 18 17" ><circle cx="7.500" cy="8.500" r="6.800" fill="#a4a6a8" stroke="#8e9092" stroke-width=".7"/><text x="7.500" y="12.800" font-family="Liberation Sans,sans-serif" font-weight="bold" font-size="12" fill="#d4d6d8" text-anchor="middle">@</text><g transform="translate(15.5 6.5) rotate(45)"><rect x="-1.400" y="0" width="2.800" height="9" fill="#cfc488" stroke="#b5b09a" stroke-width=".4"/><path d="M-1.400 9L0 11.500L1.400 9z" fill="#cfc8b4"/></g></svg><svg style="left:184px;top:3px" width="18" height="18" viewBox="0 0 18 18" ><path d="M4.500 2.500c0-2.600 8-2.600 8 0v5.500h-8z" fill="#88a6c8" stroke="#7a94b2" stroke-width=".5"/><ellipse cx="8.500" cy="2.500" rx="4" ry="1.600" fill="#a9c2de"/><path d="M0.500 8.500h9v7h-9z" fill="#c4c08a" stroke="#a8a478" stroke-width=".5"/><path d="M9.500 8.500h7v7h-7z" fill="#94c08c" stroke="#80a67a" stroke-width=".5"/><g transform="translate(16 7.5) rotate(45)"><rect x="-1.400" y="0" width="2.800" height="9" fill="#cfc488" stroke="#b5b09a" stroke-width=".4"/><path d="M-1.400 9L0 11.500L1.400 9z" fill="#cfc8b4"/></g></svg><svg style="left:207px;top:4px" width="18" height="17" viewBox="0 0 18 17" ><path d="M6 3l4.500-1.800L14 3v5l-4 1.500z" fill="#d48886"/><path d="M13 4l4 8c-1 1.500-7 1.500-8 0z" fill="#8eaad0"/><circle cx="5" cy="9" r="4.300" fill="#86bf88" stroke="#74a876" stroke-width=".5"/><g transform="translate(15.5 7) rotate(45)"><rect x="-1.400" y="0" width="2.800" height="9" fill="#cfc488" stroke="#b5b09a" stroke-width=".4"/><path d="M-1.400 9L0 11.500L1.400 9z" fill="#cfc8b4"/></g></svg><svg style="left:232px;top:3px" width="18" height="18" viewBox="0 0 18 18" ><path d="M5.500 0.500h6l3 3v9h-9z" fill="#dedee4" stroke="#adaeb6" stroke-width=".8"/><path d="M0.500 4.500h7l3 3v9h-10z" fill="#e4e4ea" stroke="#adaeb6" stroke-width=".8"/><circle cx="5.500" cy="11.500" r="3.700" fill="#b48ad8"/><circle cx="11.500" cy="7" r="2.800" fill="#b890da"/><g transform="translate(16 8) rotate(45)"><rect x="-1.400" y="0" width="2.800" height="9" fill="#cfc488" stroke="#b5b09a" stroke-width=".4"/><path d="M-1.400 9L0 11.500L1.400 9z" fill="#cfc8b4"/></g></svg><svg style="left:256px;top:4px" width="18" height="17" viewBox="0 0 18 17" ><path d="M1.500 3.500h5l1 1.500h7v9h-13z" fill="#8fb48d" stroke="#7a9e78" stroke-width=".7"/><path d="M0.500 6.500h14.500l-1.500 7.500h-11.500z" fill="#a2c89e" stroke="#7a9e78" stroke-width=".7"/><g transform="translate(16 6.5) rotate(45)"><rect x="-1.400" y="0" width="2.800" height="9" fill="#cfc488" stroke="#b5b09a" stroke-width=".4"/><path d="M-1.400 9L0 11.500L1.400 9z" fill="#cfc8b4"/></g></svg><svg style="left:280px;top:4px" width="18" height="17" viewBox="0 0 18 17" ><rect x="3.500" y="7.500" width="9.500" height="6.500" fill="#8e9296" stroke="#7c8084" stroke-width=".8"/><path d="M3.500 7.500l3.500 4.500L14.500 1.500" fill="none" stroke="#74ae6c" stroke-width="2.800" stroke-linejoin="round"/></svg><svg style="left:303px;top:4px" width="18" height="17" viewBox="0 0 18 17" ><path d="M3 2.500L15 14.500M15 2.500L3 14.500" stroke="#c07676" stroke-width="4.600"/><path d="M3.300 2.800L14.700 14.200M14.700 2.800L3.300 14.200" stroke="#d28686" stroke-width="3.400"/></svg></div>
<div id="flt"></div>
<div class="lbl" style="left:19px">Done</div><div class="lbl" style="left:160px">Status</div><div class="lbl" style="left:300px">Context</div><div class="lbl" style="left:441px">Energy</div><div class="lbl" style="left:584px">Topic</div><div class="lbl" style="left:724px">Search</div>
<div class="cb" style="left:7px"><span>All</span><i></i></div><div class="cb" style="left:148px"><span>All</span><i></i></div><div class="cb" style="left:289px"><span>All</span><i></i></div><div class="cb" style="left:430px"><b class="a" style="left:1px;top:1px;width:119px;height:20px;background:#a3b8cc"></b><span style="letter-spacing:-.2px">Conversational</span><i></i></div><div class="cb" style="left:571px"><span>All</span><i></i></div><div class="a" style="left:712px;top:166px;width:90px;height:23px;border:1px solid #7a8a99;background:#fff;box-shadow:inset 1px 1px 0 #c9d9ea"></div>
<div id="hdr"><div class="h" style="left:0px;width:279px">Description</div><div class="h" style="left:279px;width:17px"></div><div class="h" style="left:296px;width:187px">Context</div><div class="h" style="left:483px;width:120px">Time</div><div class="h" style="left:603px;width:219px">Energy</div><svg style="left:757px;top:8px" width="10" height="6" viewBox="0 0 10 6"><path d="M0.5 5.5L5 0.7L9.5 5.5z" fill="#dfe9f3" stroke="#8fa4bd" stroke-width="1"/></svg></div>
<div id="rows"><div class="sel" style="top:0px"></div><div class="sel" style="top:20px"></div><div class="sel" style="top:40px"></div><div class="sel" style="top:60px"></div><div class="sel" style="top:80px"></div><div class="a" style="left:278px;top:0;width:18px;height:100px;background:#fff"></div><div class="a" style="left:482px;top:0;width:1px;height:100px;background:#fff"></div><div class="a" style="left:602px;top:0;width:1px;height:100px;background:#fff"></div><div class="t" style="left:1px;top:2px">Agenda: Acquire lock for pool</div><div class="ck" style="left:281px;top:3px"></div><div class="t" style="left:296px;top:2px">Moving</div><div class="t" style="left:603px;top:2px;letter-spacing:-.08px">Conversational</div>
<div class="t" style="left:1px;top:22px">Acquire Rubber Duck</div><div class="ck" style="left:281px;top:23px"></div><div class="t" style="left:296px;top:22px">Moving</div>
<div class="t" style="left:1px;top:42px">Acquire: bike gloves</div><div class="ck" style="left:281px;top:43px"></div><div class="t" style="left:296px;top:42px">Moving</div>
<div class="t s" style="left:1px;top:62px">Acquire stamps</div><div class="ck" style="left:281px;top:63px"><svg style="left:1px;top:1px" width="10" height="10" viewBox="0 0 10 10"><path d="M1.600 4.300L3.900 7.800L8.600 1.400" stroke="#1a1a1a" stroke-width="2.100" fill="none"/></svg></div><div class="t s" style="left:296px;top:62px">Moving</div>
<div class="t" style="left:1px;top:82px">Acquire: order contacts</div><div class="ck" style="left:281px;top:83px"></div><div class="t" style="left:296px;top:82px">Kincaid</div>
<div class="t s" style="left:1px;top:102px">Agenda: Danny Thursday</div><div class="ck" style="left:281px;top:103px"><svg style="left:1px;top:1px" width="10" height="10" viewBox="0 0 10 10"><path d="M1.600 4.300L3.900 7.800L8.600 1.400" stroke="#1a1a1a" stroke-width="2.100" fill="none"/></svg></div><div class="t s" style="left:296px;top:102px">Home</div><div class="t s" style="left:482px;top:102px;word-spacing:1.4px;letter-spacing:.35px">5 min</div><div class="t s" style="left:603px;top:102px;letter-spacing:-.08px">Conversational</div>
<div class="t s" style="left:1px;top:122px;letter-spacing:-.12px">Agenda: reserve ferry, where are we going</div><div class="ck" style="left:281px;top:123px"><svg style="left:1px;top:1px" width="10" height="10" viewBox="0 0 10 10"><path d="M1.600 4.300L3.900 7.800L8.600 1.400" stroke="#1a1a1a" stroke-width="2.100" fill="none"/></svg></div><div class="t s" style="left:296px;top:122px">Home</div><div class="t s" style="left:603px;top:122px;letter-spacing:-.08px">Conversational</div>
<div class="t s" style="left:1px;top:142px">Update Trout Lake application</div><div class="ck" style="left:281px;top:143px"><svg style="left:1px;top:1px" width="10" height="10" viewBox="0 0 10 10"><path d="M1.600 4.300L3.900 7.800L8.600 1.400" stroke="#1a1a1a" stroke-width="2.100" fill="none"/></svg></div><div class="t s" style="left:296px;top:142px">Kincaid</div>
<div class="t s" style="left:1px;top:162px">Oil Tully's ears</div><div class="ck" style="left:281px;top:163px"><svg style="left:1px;top:1px" width="10" height="10" viewBox="0 0 10 10"><path d="M1.600 4.300L3.900 7.800L8.600 1.400" stroke="#1a1a1a" stroke-width="2.100" fill="none"/></svg></div><div class="t s" style="left:296px;top:162px">Home</div>
<div class="t" style="left:1px;top:182px">Ping Rodrigo</div><div class="ck" style="left:281px;top:183px"></div><div class="t" style="left:296px;top:182px">Kincaid</div><div class="t" style="left:482px;top:182px;word-spacing:1.4px;letter-spacing:.35px">5 min</div>
<div class="t" style="left:1px;top:202px">Update phone list</div><div class="ck" style="left:281px;top:203px"></div><div class="t" style="left:296px;top:202px">Home</div>
</div><div id="lf"></div>
</body></html>
